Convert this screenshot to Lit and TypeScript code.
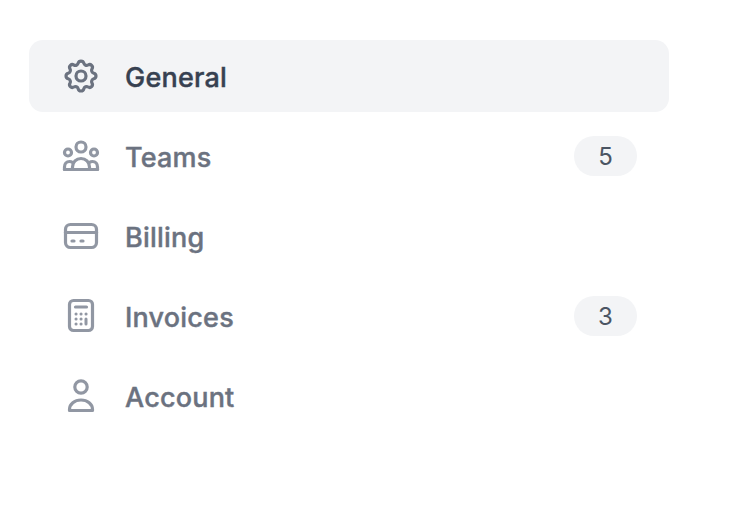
import { LitElement, css, html, svg } from "lit";
import { customElement } from "lit/decorators.js";

const icons = {
  general: svg`
    <path d="M17.2 7.2c.7-2.9 4.9-2.9 5.6 0a2.9 2.9 0 0 0 4.3 1.8c2.6-1.6 5.5 1.4 3.9 3.9a2.9 2.9 0 0 0 1.8 4.3c2.9.7 2.9 4.9 0 5.6a2.9 2.9 0 0 0-1.8 4.3c1.6 2.6-1.4 5.5-3.9 3.9a2.9 2.9 0 0 0-4.3 1.8c-.7 2.9-4.9 2.9-5.6 0a2.9 2.9 0 0 0-4.3-1.8c-2.6 1.6-5.5-1.4-3.9-3.9a2.9 2.9 0 0 0-1.8-4.3c-2.9-.7-2.9-4.9 0-5.6a2.9 2.9 0 0 0 1.8-4.3c-1.6-2.6 1.4-5.5 3.9-3.9 1.7 1 3.8.1 4.3-1.8z" />
    <circle cx="20" cy="20" r="5" />
  `,
  teams: svg`
    <circle cx="20" cy="11" r="5" />
    <circle cx="7" cy="16.5" r="3.5" />
    <circle cx="33" cy="16.5" r="3.5" />
    <path d="M11.5 33.5V31a8.5 8.5 0 0 1 17 0v2.5z" />
    <path d="M3.5 33.5V31c0-3 2-5.5 5-5.5 1.2 0 2.3.4 3.2 1" />
    <path d="M36.5 33.5V31c0-3-2-5.5-5-5.5-1.2 0-2.3.4-3.2 1" />
    <path d="M3.5 33.5h33" />
  `,
  billing: svg`
    <rect x="4.5" y="8.5" width="31" height="23" rx="5" />
    <path d="M4.5 16.5h31" />
    <path d="M11 25h2M20 25h2" />
  `,
  invoices: svg`
    <rect x="8.5" y="4.5" width="23" height="30" rx="4" />
    <path d="M14.5 11h11" />
    <g class="dots">
      <path d="M15 18h.1M20 18h.1M25 18h.1M15 23h.1M20 23h.1M15 28h.1M20 28h.1" />
      <path d="M25 23v5" />
    </g>
  `,
  account: svg`
    <circle cx="20" cy="11" r="6.2" />
    <path d="M8.5 34.5v-1c0-5.5 5-9.5 11.5-9.5s11.5 4 11.5 9.5v1z" />
  `,
};

type NavItem = {
  label: string;
  icon: keyof typeof icons;
  count?: number;
  active?: boolean;
};

const items: NavItem[] = [
  { label: "General", icon: "general", active: true },
  { label: "Teams", icon: "teams", count: 5 },
  { label: "Billing", icon: "billing" },
  { label: "Invoices", icon: "invoices", count: 3 },
  { label: "Account", icon: "account" },
];

@customElement("app-root")
export class AppRoot extends LitElement {
  static styles = css`
    :host {
      display: block;
      height: 520px;
      background: #ffffff;
      font-family: Inter, "Liberation Sans", sans-serif;
    }

    nav {
      display: flex;
      flex-direction: column;
      gap: 8px;
      width: 640px;
      padding: 40px 0 0 29px;
    }

    .item {
      display: flex;
      align-items: center;
      height: 72px;
      padding: 0 32px;
      border-radius: 14px;
      color: #6b7280;
      font-size: 27px;
      font-weight: 500;
      text-decoration: none;
    }

    .item.active {
      background: #f3f4f6;
      color: #374151;
    }

    .item svg {
      flex: none;
      width: 40px;
      height: 40px;
      margin-right: 24px;
      fill: none;
      stroke: #9197a3;
      stroke-width: 3.2;
      stroke-linecap: round;
      stroke-linejoin: round;
    }

    .item.active svg {
      stroke: #6b7280;
    }

    .item svg .dots {
      stroke-width: 3;
    }

    .label {
      flex: 1;
      padding-top: 2px;
      letter-spacing: 0.2px;
      -webkit-text-stroke: 0.4px currentColor;
    }

    .badge {
      display: flex;
      align-items: center;
      justify-content: center;
      width: 63px;
      height: 40px;
      border-radius: 20px;
      background: #f3f4f6;
      color: #4b5563;
      font-size: 24px;
      font-weight: 400;
    }
  `;

  render() {
    return html`
      <nav>
        ${items.map(
          (item) => html`
            <a class="item ${item.active ? "active" : ""}" href="#">
              <svg viewBox="0 0 40 40">${icons[item.icon]}</svg>
              <span class="label">${item.label}</span>
              ${item.count ? html`<span class="badge">${item.count}</span>` : ""}
            </a>
          `
        )}
      </nav>
    `;
  }
}
